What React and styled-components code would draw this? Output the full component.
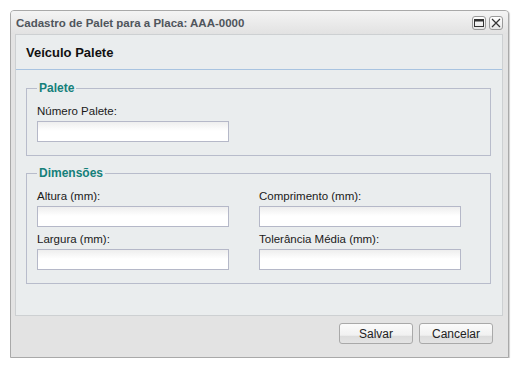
import React from "react";
import styled, { createGlobalStyle } from "styled-components";

const GlobalStyle = createGlobalStyle`
  html, body { margin: 0; padding: 0; background: #ffffff; }
  body { font-family: "Liberation Sans", Arial, sans-serif; }
  * { box-sizing: border-box; }
`;

const Page = styled.div`
  padding: 10px 0 0 10px;
`;

const Window = styled.div`
  width: 499px;
  height: 348px;
  display: flex;
  flex-direction: column;
  background: #e3e3e3;
  border: 1px solid #a9a9a9;
  border-radius: 4px 4px 0 0;
  box-shadow: 1px 1px 1px rgba(0, 0, 0, 0.18);
`;

const TitleBar = styled.div`
  height: 23px;
  display: flex;
  align-items: center;
  justify-content: space-between;
  padding: 0 5px 0 5px;
  background: linear-gradient(#f4f4f4, #e2e2e2);
  border-radius: 3px 3px 0 0;
`;

const Title = styled.div`
  font-size: 11.5px;
  font-weight: bold;
  color: #4f555c;
`;

const Tools = styled.div`
  display: flex;
  gap: 3px;
`;

const ToolButton = styled.div`
  width: 14px;
  height: 14px;
  border: 1px solid #9a9a9a;
  border-radius: 3px;
  background: linear-gradient(#ffffff, #e6e6e6);
  display: flex;
  align-items: center;
  justify-content: center;
`;

const Body = styled.div`
  flex: 1;
  display: flex;
  flex-direction: column;
  padding: 0 5px 0 4px;
`;

const Panel = styled.div`
  height: 282px;
  display: flex;
  flex-direction: column;
  background: #eaedee;
  border: 1px solid #cdd0d2;
`;

const PanelHeader = styled.div`
  height: 35px;
  display: flex;
  align-items: center;
  padding-left: 10px;
  border-bottom: 1px solid #a8c3e0;
  font-size: 13px;
  font-weight: bold;
  color: #111;
`;

const PanelBody = styled.div`
  display: flex;
  flex-direction: column;
  gap: 10px;
  padding: 11px 11px 0 10px;
`;

const FieldSet = styled.fieldset`
  margin: 0;
  padding: 0 10px 13px 10px;
  border: 1px solid #b8bccb;
`;

const Legend = styled.legend`
  padding: 0 2px;
  font-size: 12px;
  font-weight: bold;
  color: #15807a;
`;

const Grid = styled.div`
  display: grid;
  grid-template-columns: 222px 202px;
  row-gap: 5px;
  padding-top: 9px;
`;

const Field = styled.div`
  display: flex;
  flex-direction: column;
  gap: 3px;
`;

const Label = styled.label`
  font-size: 11.5px;
  line-height: 14px;
  color: #1a1a1a;
`;

const Input = styled.input`
  width: ${(p) => p.$w}px;
  height: 21px;
  margin: 0;
  padding: 0 4px;
  border: 1px solid #b5b8c8;
  background: linear-gradient(#eeeeee, #ffffff 9px);
  outline: none;
  font-family: inherit;
  font-size: 12px;
`;

const Footer = styled.div`
  display: flex;
  justify-content: flex-end;
  gap: 6px;
  padding: 7px 10px 0 0;
`;

const Button = styled.button`
  width: 74px;
  height: 21px;
  padding: 0;
  border: 1px solid #a9a9a9;
  border-radius: 3px;
  background: linear-gradient(#fbfbfb 0%, #f1f1f1 60%, #dcdcdc 62%, #e4e4e4 100%);
  font-family: "Liberation Sans", Arial, sans-serif;
  font-size: 12px;
  color: #222;
`;

export default function App() {
  return (
    <Page>
      <GlobalStyle />
      <Window>
        <TitleBar>
          <Title>Cadastro de Palet para a Placa: AAA-0000</Title>
          <Tools>
            <ToolButton>
              <svg width="10" height="8" viewBox="0 0 10 8">
                <rect x="0.5" y="0.5" width="9" height="7" fill="none" stroke="#333" strokeWidth="1" />
                <rect x="0.5" y="0.5" width="9" height="2" fill="#333" />
              </svg>
            </ToolButton>
            <ToolButton>
              <svg width="10" height="10" viewBox="0 0 10 10">
                <path d="M1 1 L9 9 M9 1 L1 9" stroke="#333" strokeWidth="1.2" />
              </svg>
            </ToolButton>
          </Tools>
        </TitleBar>
        <Body>
          <Panel>
            <PanelHeader>Veículo Palete</PanelHeader>
            <PanelBody>
              <FieldSet>
                <Legend>Palete</Legend>
                <Grid>
                  <Field>
                    <Label>Número Palete:</Label>
                    <Input $w={192} />
                  </Field>
                </Grid>
              </FieldSet>
              <FieldSet>
                <Legend>Dimensões</Legend>
                <Grid>
                  <Field>
                    <Label>Altura (mm):</Label>
                    <Input $w={192} />
                  </Field>
                  <Field>
                    <Label>Comprimento (mm):</Label>
                    <Input $w={202} />
                  </Field>
                  <Field>
                    <Label>Largura (mm):</Label>
                    <Input $w={192} />
                  </Field>
                  <Field>
                    <Label>Tolerância Média (mm):</Label>
                    <Input $w={202} />
                  </Field>
                </Grid>
              </FieldSet>
            </PanelBody>
          </Panel>
          <Footer>
            <Button>Salvar</Button>
            <Button>Cancelar</Button>
          </Footer>
        </Body>
      </Window>
    </Page>
  );
}
